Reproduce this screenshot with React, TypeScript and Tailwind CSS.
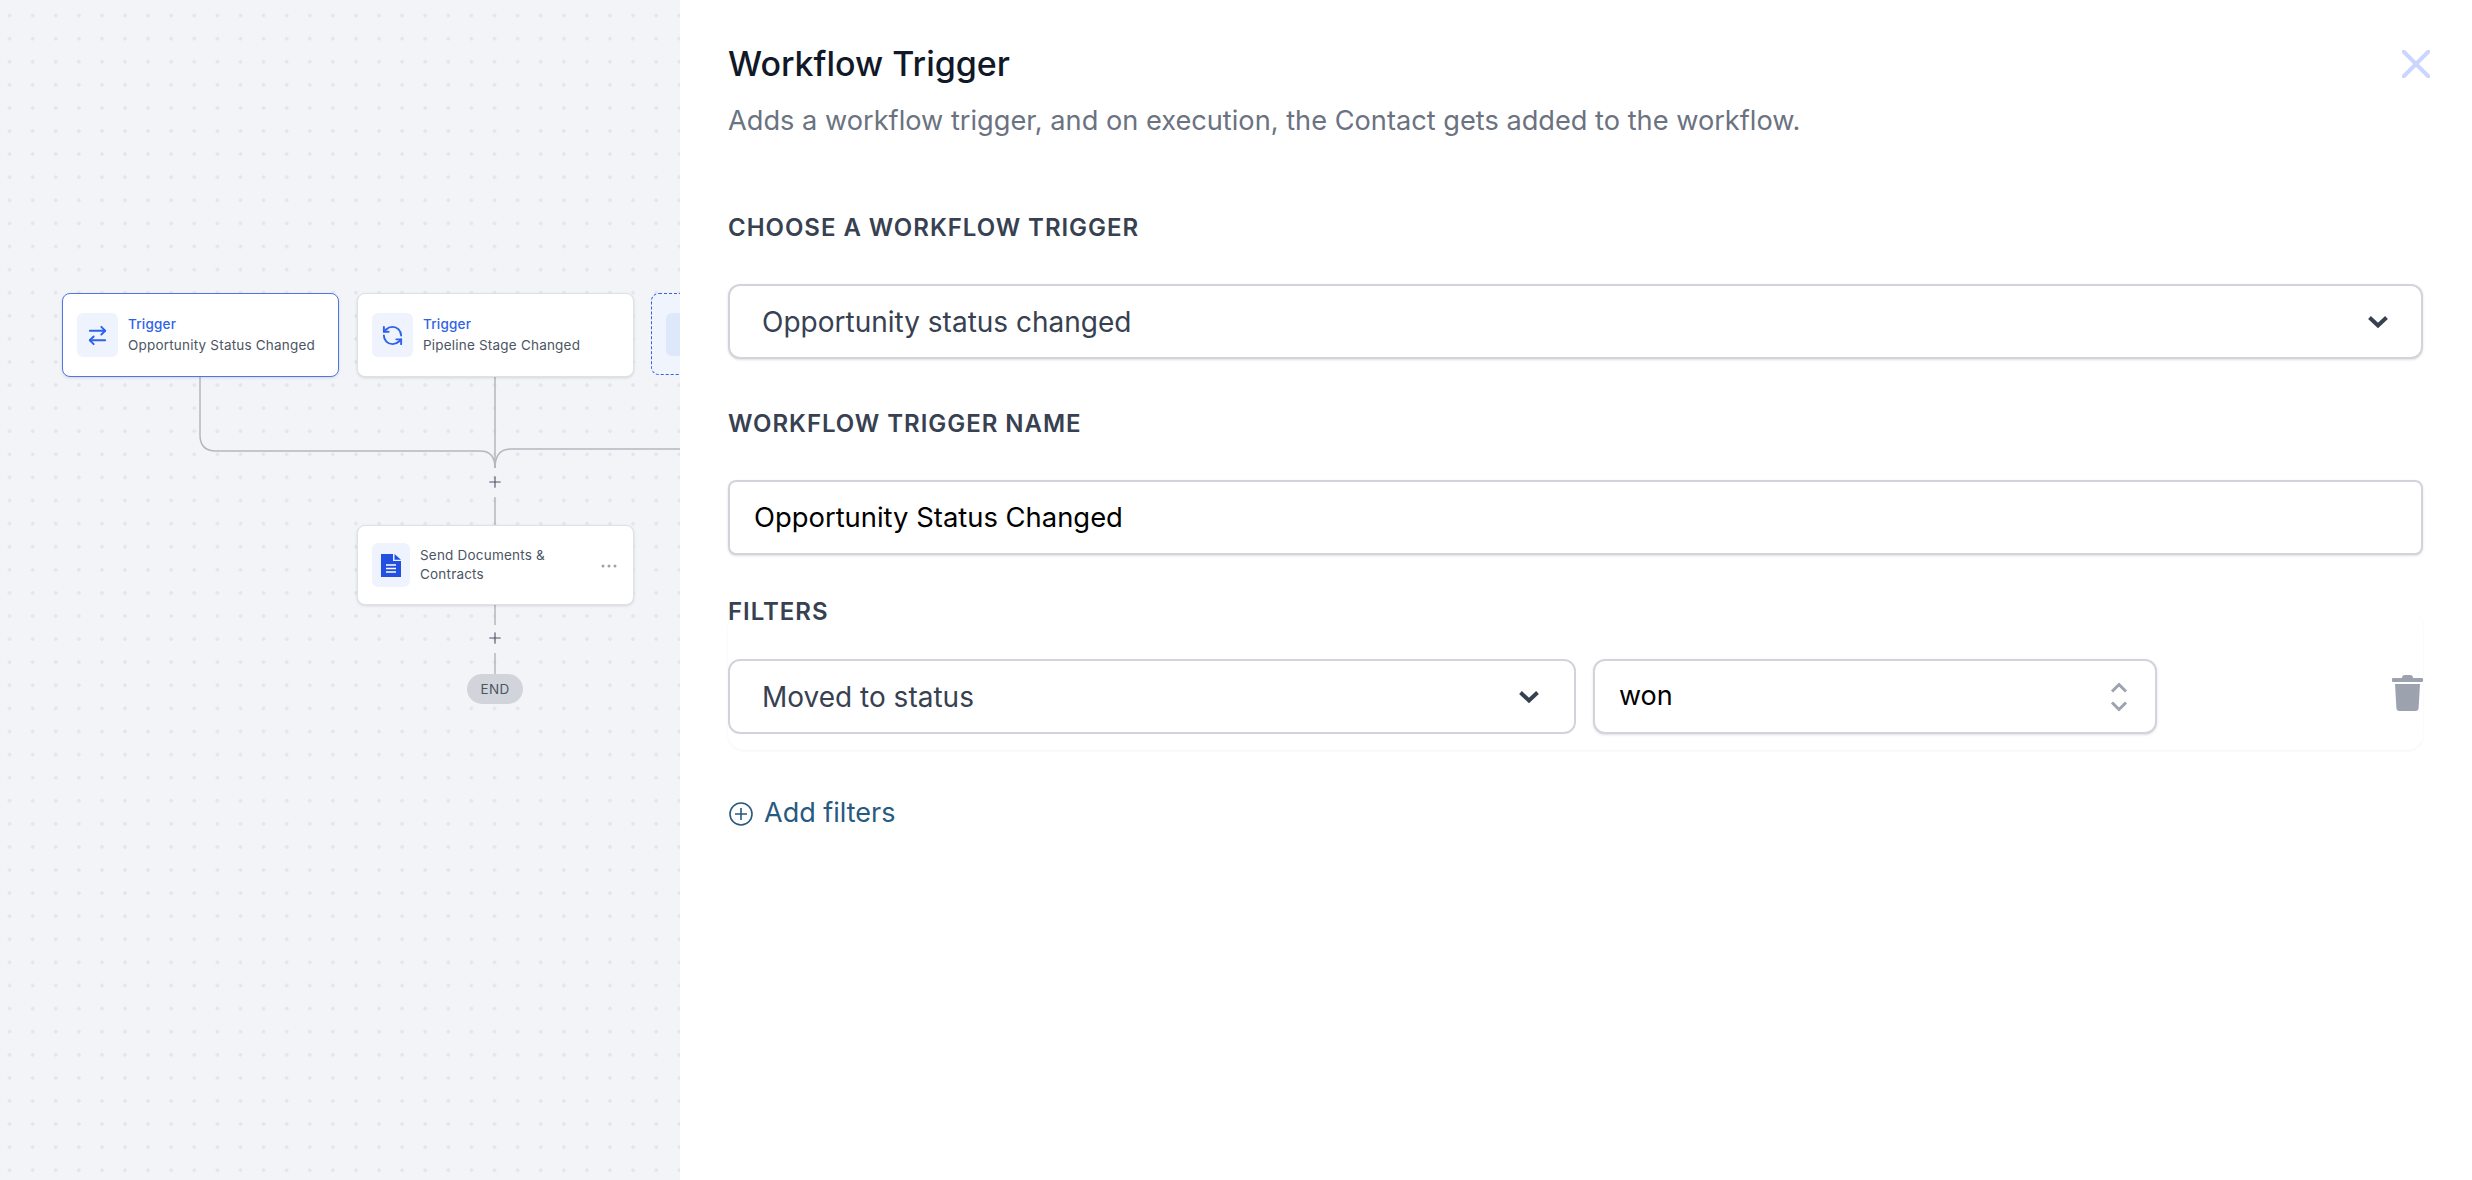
import { ArrowRightLeft, Plus, RefreshCcw } from "lucide-react";

function Chevron() {
  return (
    <svg width="20" height="14" viewBox="0 0 20 14" fill="none" className="shrink-0">
      <path d="M1.500 2.500 10 10.500l8.500-8" stroke="#374151" strokeWidth="4" />
    </svg>
  );
}

function NodeCard({ x, y, h = 80, active, children }: { x: number; y: number; h?: number; active?: boolean; children: React.ReactNode }) {
  return (
    <div
      style={{ left: x, top: y, height: h }}
      className={`absolute w-[277px] rounded-[8px] bg-white flex items-center pl-[14px] shadow-[0_1px_3px_rgba(0,0,0,0.12)] border ${active ? "border-[#4f76e8]" : "border-[#dfe1e6]"}`}
    >
      {children}
    </div>
  );
}

function IconBox({ children, w = "w-[41px]" }: { children: React.ReactNode; w?: string }) {
  return <div className={`${w} h-[44px] rounded-[6px] bg-[#eef3fe] flex items-center justify-center shrink-0`}>{children}</div>;
}

function TriggerText({ label }: { label: string }) {
  return (
    <div className="ml-[10px] text-[13.5px] leading-[21px] tracking-[0.2px]">
      <div className="font-medium text-[#2f62e9]">Trigger</div>
      <div className="text-[#4b5563] whitespace-nowrap">{label}</div>
    </div>
  );
}

function Canvas() {
  return (
    <div className="relative w-[680px] h-full shrink-0 overflow-hidden bg-[#f3f4f8] bg-[radial-gradient(#e4e6ec_2px,transparent_2px)] bg-[length:23.1px_23.1px] bg-[position:-2px_4px]">
      <svg className="absolute left-0 top-0" width="680" height="720" fill="none" stroke="#b4b7bd" strokeWidth="1.5">
        <path d="M200 377v58q0 16 16 16h264q15 0 15 17" />
        <path d="M495 377v91" />
        <path d="M680 449H511q-16 0-16 19" />
        <path d="M495 497v28" />
        <path d="M495 605v20" />
        <path d="M495 653v21" />
      </svg>

      <NodeCard x={62} y={293} h={84} active>
        <IconBox>
          <ArrowRightLeft size={23} color="#2f62e9" strokeWidth={2} />
        </IconBox>
        <TriggerText label="Opportunity Status Changed" />
      </NodeCard>

      <NodeCard x={357} y={293} h={84}>
        <IconBox>
          <RefreshCcw size={23} color="#2f62e9" strokeWidth={2} />
        </IconBox>
        <TriggerText label="Pipeline Stage Changed" />
      </NodeCard>

      <div className="absolute left-[651px] top-[293px] w-[277px] h-[82px] rounded-[8px] border border-dashed border-[#2f62e9] bg-[#eff4fd] flex items-center pl-[14px]">
        <div className="w-[41px] h-[43px] rounded-[6px] bg-[#dde8fb]" />
      </div>

      <Plus className="absolute left-[486px] top-[473px]" size={18} color="#4b5563" strokeWidth={1.5} />

      <NodeCard x={357} y={525}>
        <IconBox w="w-[38px]">
          <svg width="20" height="23" viewBox="0 0 20 23">
            <path d="M0 0h12v7h8v16H0z" fill="#2250e0" />
            <path d="M13.500 0 20 5.800h-6.500z" fill="#2250e0" />
            <path d="M5 11h10M5 14.500h10M5 18h10" stroke="#fff" strokeWidth="1.4" />
          </svg>
        </IconBox>
        <div className="ml-[10px] w-[165px] text-[13.5px] leading-[19px] tracking-[0.2px] text-[#4b5563]">Send Documents &amp; Contracts</div>
        <svg className="absolute left-[243px] top-[38px]" width="16" height="4" viewBox="0 0 16 4" fill="#9ca3af">
          <circle cx="2" cy="2" r="1.5" />
          <circle cx="8" cy="2" r="1.5" />
          <circle cx="14" cy="2" r="1.5" />
        </svg>
      </NodeCard>

      <Plus className="absolute left-[486px] top-[629px]" size={18} color="#4b5563" strokeWidth={1.5} />

      <div className="absolute left-[467px] top-[674px] w-[56px] h-[30px] rounded-full bg-[#d1d5db] flex items-center justify-center text-[13.5px] tracking-[0.3px] text-[#4b5563]">
        END
      </div>
    </div>
  );
}

function Label({ children, className }: { children: React.ReactNode; className: string }) {
  return <div className={`text-[24px] leading-[28px] font-semibold uppercase tracking-[0.96px] text-[#374151] ${className}`}>{children}</div>;
}

export default function App() {
  return (
    <div className="flex h-[1180px] w-full overflow-hidden bg-white font-['Inter',sans-serif]">
      <Canvas />
      <div className="flex-1 min-w-0 pl-[48px] pr-[49px] pt-[40px]">
        <div className="flex items-start justify-between">
          <h1 className="text-[34px] leading-[48px] font-medium text-[#111827]">Workflow Trigger</h1>
          <svg className="mt-[10px] -mr-[7px]" width="28" height="28" viewBox="0 0 28 28" fill="none">
            <path d="M1.500 1.500l25 25M26.500 1.500l-25 25" stroke="#cdd5fb" strokeWidth="4" strokeLinecap="round" />
          </svg>
        </div>
        <p className="mt-[13px] text-[27.2px] leading-[40px] text-[#6b7280]">Adds a workflow trigger, and on execution, the Contact gets added to the workflow.</p>

        <Label className="mt-[73px]">Choose a workflow trigger</Label>
        <div className="mt-[42px] h-[75px] rounded-[12px] border-2 border-[#d1d5db] bg-white shadow-sm flex items-center justify-between pl-[32px] pr-[33px]">
          <span className="text-[28px] text-[#374151]">Opportunity status changed</span>
          <Chevron />
        </div>

        <Label className="mt-[51px]">Workflow trigger name</Label>
        <div className="mt-[42px] h-[75px] rounded-[8px] border-2 border-[#d1d5db] bg-white shadow-sm flex items-center pl-[24px]">
          <span className="text-[27.4px] text-black">Opportunity Status Changed</span>
        </div>

        <Label className="mt-[43px]">Filters</Label>
        <div className="relative -mt-[14px] pt-[47px] pb-[16px] rounded-[16px] shadow-[0_1px_3px_rgba(0,0,0,0.05)] flex items-start">
          <div className="w-[848px] h-[75px] rounded-[12px] border-2 border-[#d1d5db] bg-white flex items-center justify-between pl-[32px] pr-[35px]">
            <span className="text-[28px] text-[#374151]">Moved to status</span>
            <Chevron />
          </div>
          <div className="ml-[17px] w-[564px] h-[75px] rounded-[12px] border-2 border-[#d1d5db] bg-white shadow-sm flex items-center justify-between pl-[24px] pr-[27px]">
            <span className="text-[27px] text-black">won</span>
            <svg width="18" height="32" viewBox="0 0 18 32" fill="none" stroke="#9ca3af" strokeWidth="3">
              <path d="M2 10.500 9 3.500l7 7M2 21.500l7 7 7-7" />
            </svg>
          </div>
          <svg className="ml-auto mt-[16px]" width="31" height="36" viewBox="0 0 31 36" fill="#9ca3af">
            <path d="M10 3q0-3 3-3h5q3 0 3 3h9a1 1 0 0 1 1 1v2a1 1 0 0 1-1 1H1a1 1 0 0 1-1-1V4a1 1 0 0 1 1-1z" />
            <path d="M3 9h25l-1.400 24q-.2 3-3 3H7.400q-2.800 0-3-3z" />
          </svg>
        </div>

        <div className="mt-[43px] ml-[1px] flex items-center gap-[11px] text-[#28597f]">
          <svg className="mt-[2px]" width="24" height="24" viewBox="0 0 24 24" fill="none" stroke="#28597f" strokeWidth="1.6">
            <circle cx="12" cy="12" r="11" />
            <path d="M12 6v12M6 12h12" />
          </svg>
          <span className="text-[27px] leading-[40px]">Add filters</span>
        </div>
      </div>
    </div>
  );
}
